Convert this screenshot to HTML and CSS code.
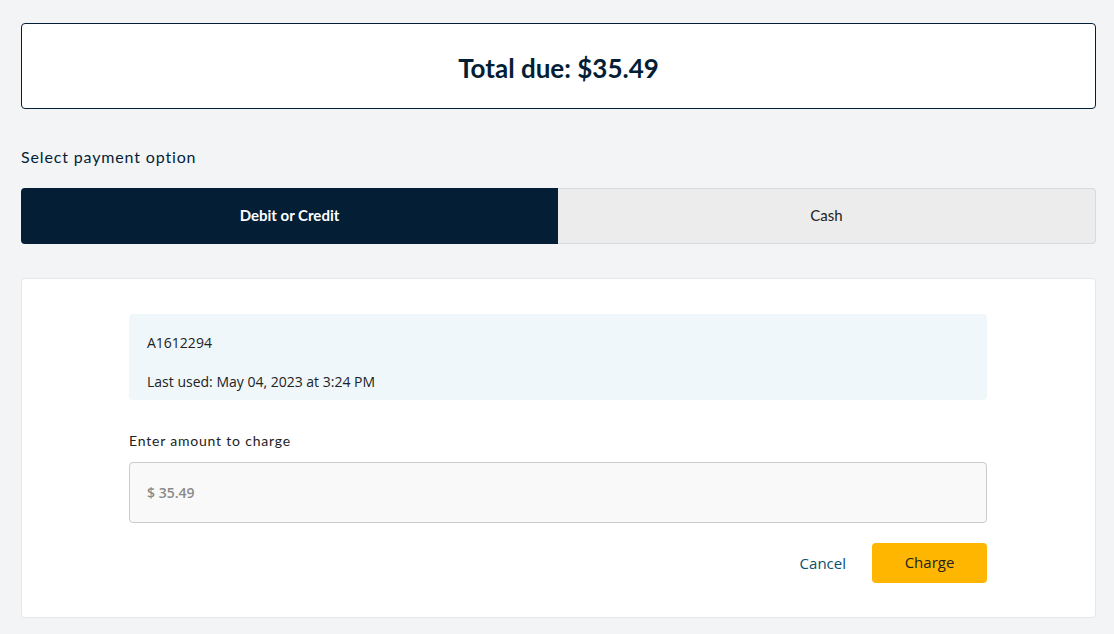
FILE: index.html
```html
<!DOCTYPE html>
<html lang="en">
<head>
    <meta charset="UTF-8">
    <title>Payment</title>
    <meta name="viewport" content="width=device-width, initial-scale=1">
    <link rel="stylesheet" href="styles.css">
</head>
<body>
    <div class="pago-container">
        <div class="total-box">
            <h1>Total due: $35.49</h1>
        </div>

        <p class="seccion-label">Select payment option</p>
        <div class="tabs">
            <button class="tab activo">Debit or Credit</button>
            <button class="tab">Cash</button>
        </div>

        <div class="card">
            <div class="card-inner">
                <div class="info-tarjeta">
                    <div>A1612294</div>
                    <div>Last used: May 04, 2023 at 3:24 PM</div>
                </div>

                <label for="monto" class="monto-label">Enter amount to charge</label>
                <input type="text" id="monto" class="monto-input" placeholder="$ 35.49">

                <div class="acciones">
                    <a href="#" class="btn-cancelar">Cancel</a>
                    <button class="btn-cobrar">Charge</button>
                </div>
            </div>
        </div>
    </div>
</body>
</html>
```

FILE: styles.css
```css
body {
    background: #f3f4f6;
    font-family: Lato, 'Open Sans', Arial, sans-serif;
    margin: 0;
    color: #041e36;
}
.pago-container {
    padding: 23px 18px 16px 21px;
}
.total-box {
    background: #fff;
    border: 1px solid #041e36;
    border-radius: 4px;
    height: 84px;
    box-sizing: content-box;
    display: flex;
    align-items: center;
    justify-content: center;
}
.total-box h1 {
    margin: 3px 0 0 0;
    font-size: 26px;
    font-weight: 700;
    color: #041e36;
}
.seccion-label {
    margin: 38px 0 21px 0;
    font-size: 16px;
    line-height: 20px;
    letter-spacing: 0.85px;
    color: #041e36;
}
.tabs {
    display: flex;
    height: 56px;
}
.tab {
    flex: 1;
    padding: 0 0 2px 0;
    font-family: Lato, Arial, sans-serif;
    font-size: 15px;
    cursor: pointer;
    color: #222;
    background: #ececec;
    border: 1px solid #d9d9d9;
    border-left: none;
    border-radius: 0 4px 4px 0;
}
.tab.activo {
    flex: 0 0 537px;
    background: #041e36;
    color: #fff;
    font-weight: 700;
    border: none;
    border-radius: 4px 0 0 4px;
}
.card {
    margin-top: 34px;
    background: #fff;
    border: 1px solid #e6e7e9;
    border-radius: 4px;
    padding: 35px 108px 34px 107px;
}
.info-tarjeta {
    background: #eff7fb;
    border-radius: 4px;
    padding: 19px 18px 8px 18px;
    font-family: 'Open Sans', Arial, sans-serif;
    font-size: 14px;
    color: #222;
    display: flex;
    flex-direction: column;
    gap: 19px;
    line-height: 20px;
}
.monto-label {
    display: block;
    margin: 32px 0 12px 0;
    font-size: 14px;
    line-height: 18px;
    letter-spacing: 0.8px;
    color: #222;
}
.monto-input {
    box-sizing: border-box;
    width: 100%;
    height: 61px;
    padding: 0 17px;
    border: 1px solid #cbcbcb;
    border-radius: 4px;
    background: #f9f9f9;
    font-family: 'Open Sans', Arial, sans-serif;
    font-size: 14px;
    font-weight: 600;
}
.monto-input::placeholder {
    color: #8a8a8a;
}
.acciones {
    display: flex;
    justify-content: flex-end;
    align-items: center;
    margin-top: 20px;
    gap: 26px;
}
.btn-cancelar {
    font-family: 'Open Sans', Arial, sans-serif;
    font-size: 15px;
    color: #0b4f6c;
    text-decoration: none;
}
.btn-cobrar {
    width: 115px;
    height: 40px;
    padding: 0 0 2px 0;
    border: none;
    border-radius: 4px;
    background: #ffb600;
    color: #222;
    font-family: 'Open Sans', Arial, sans-serif;
    font-size: 15px;
    cursor: pointer;
}
```
